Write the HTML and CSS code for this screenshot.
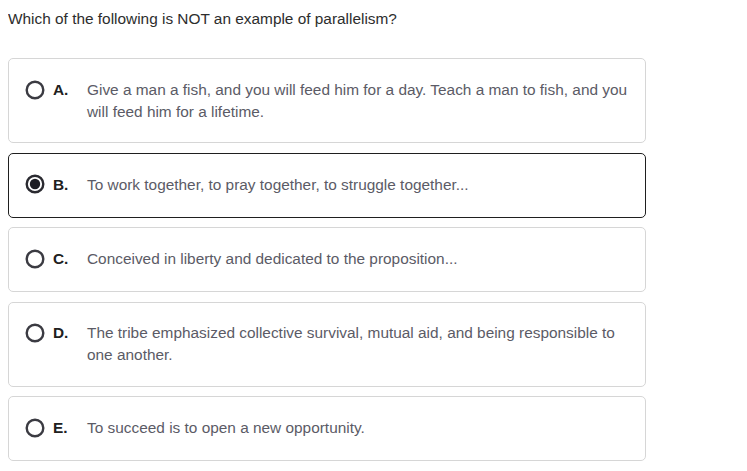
FILE: index.html
```html
<!DOCTYPE html>
<html>
<head>
<meta charset="utf-8">
<link rel="stylesheet" href="styles.css">
</head>
<body>
<p class="question">Which of the following is NOT an example of parallelism?</p>
<div class="options">
  <div class="option">
    <svg class="radio" width="24" height="24" viewBox="0 0 24 24"><circle cx="12" cy="12" r="8.3" fill="none" stroke="#3b3b42" stroke-width="2.4"/></svg>
    <span class="letter">A.</span>
    <span class="text">Give a man a fish, and you will feed him for a day. Teach a man to fish, and you will feed him for a lifetime.</span>
  </div>
  <div class="option selected">
    <svg class="radio" width="24" height="24" viewBox="0 0 24 24"><circle cx="12" cy="12" r="8.3" fill="none" stroke="#2a2a30" stroke-width="2.4"/><circle cx="12" cy="12" r="5.2" fill="#1e1e24"/></svg>
    <span class="letter">B.</span>
    <span class="text">To work together, to pray together, to struggle together...</span>
  </div>
  <div class="option">
    <svg class="radio" width="24" height="24" viewBox="0 0 24 24"><circle cx="12" cy="12" r="8.3" fill="none" stroke="#3b3b42" stroke-width="2.4"/></svg>
    <span class="letter">C.</span>
    <span class="text">Conceived in liberty and dedicated to the proposition...</span>
  </div>
  <div class="option">
    <svg class="radio" width="24" height="24" viewBox="0 0 24 24"><circle cx="12" cy="12" r="8.3" fill="none" stroke="#3b3b42" stroke-width="2.4"/></svg>
    <span class="letter">D.</span>
    <span class="text">The tribe emphasized collective survival, mutual aid, and being responsible to one another.</span>
  </div>
  <div class="option">
    <svg class="radio" width="24" height="24" viewBox="0 0 24 24"><circle cx="12" cy="12" r="8.3" fill="none" stroke="#3b3b42" stroke-width="2.4"/></svg>
    <span class="letter">E.</span>
    <span class="text">To succeed is to open a new opportunity.</span>
  </div>
</div>
</body>
</html>
```
FILE: styles.css
```css
body {
  margin: 8px;
  font-family: "Liberation Sans", Arial, sans-serif;
  font-size: 15.4px;
  background: #fff;
}
.question {
  margin: 0;
  line-height: 22px;
  color: #2d2d2d;
}
.options {
  margin-top: 28px;
  width: 638px;
  display: flex;
  flex-direction: column;
  gap: 9.5px;
}
.option {
  display: flex;
  align-items: flex-start;
  border: 1px solid #d6d6d6;
  border-radius: 5px;
  padding: 19.5px 16px 19.5px 14px;
}
.option.selected {
  border-color: #1f1f1f;
}
.radio {
  flex: none;
  display: block;
  margin-top: -1px;
  margin-bottom: 1px;
}
.letter {
  flex: none;
  width: 34px;
  margin-left: 6px;
  font-weight: bold;
  color: #202020;
  line-height: 22px;
}
.text {
  color: #5b5b66;
  line-height: 22px;
}
.selected .letter,
.selected .text {
  margin-top: 1px;
}
```
